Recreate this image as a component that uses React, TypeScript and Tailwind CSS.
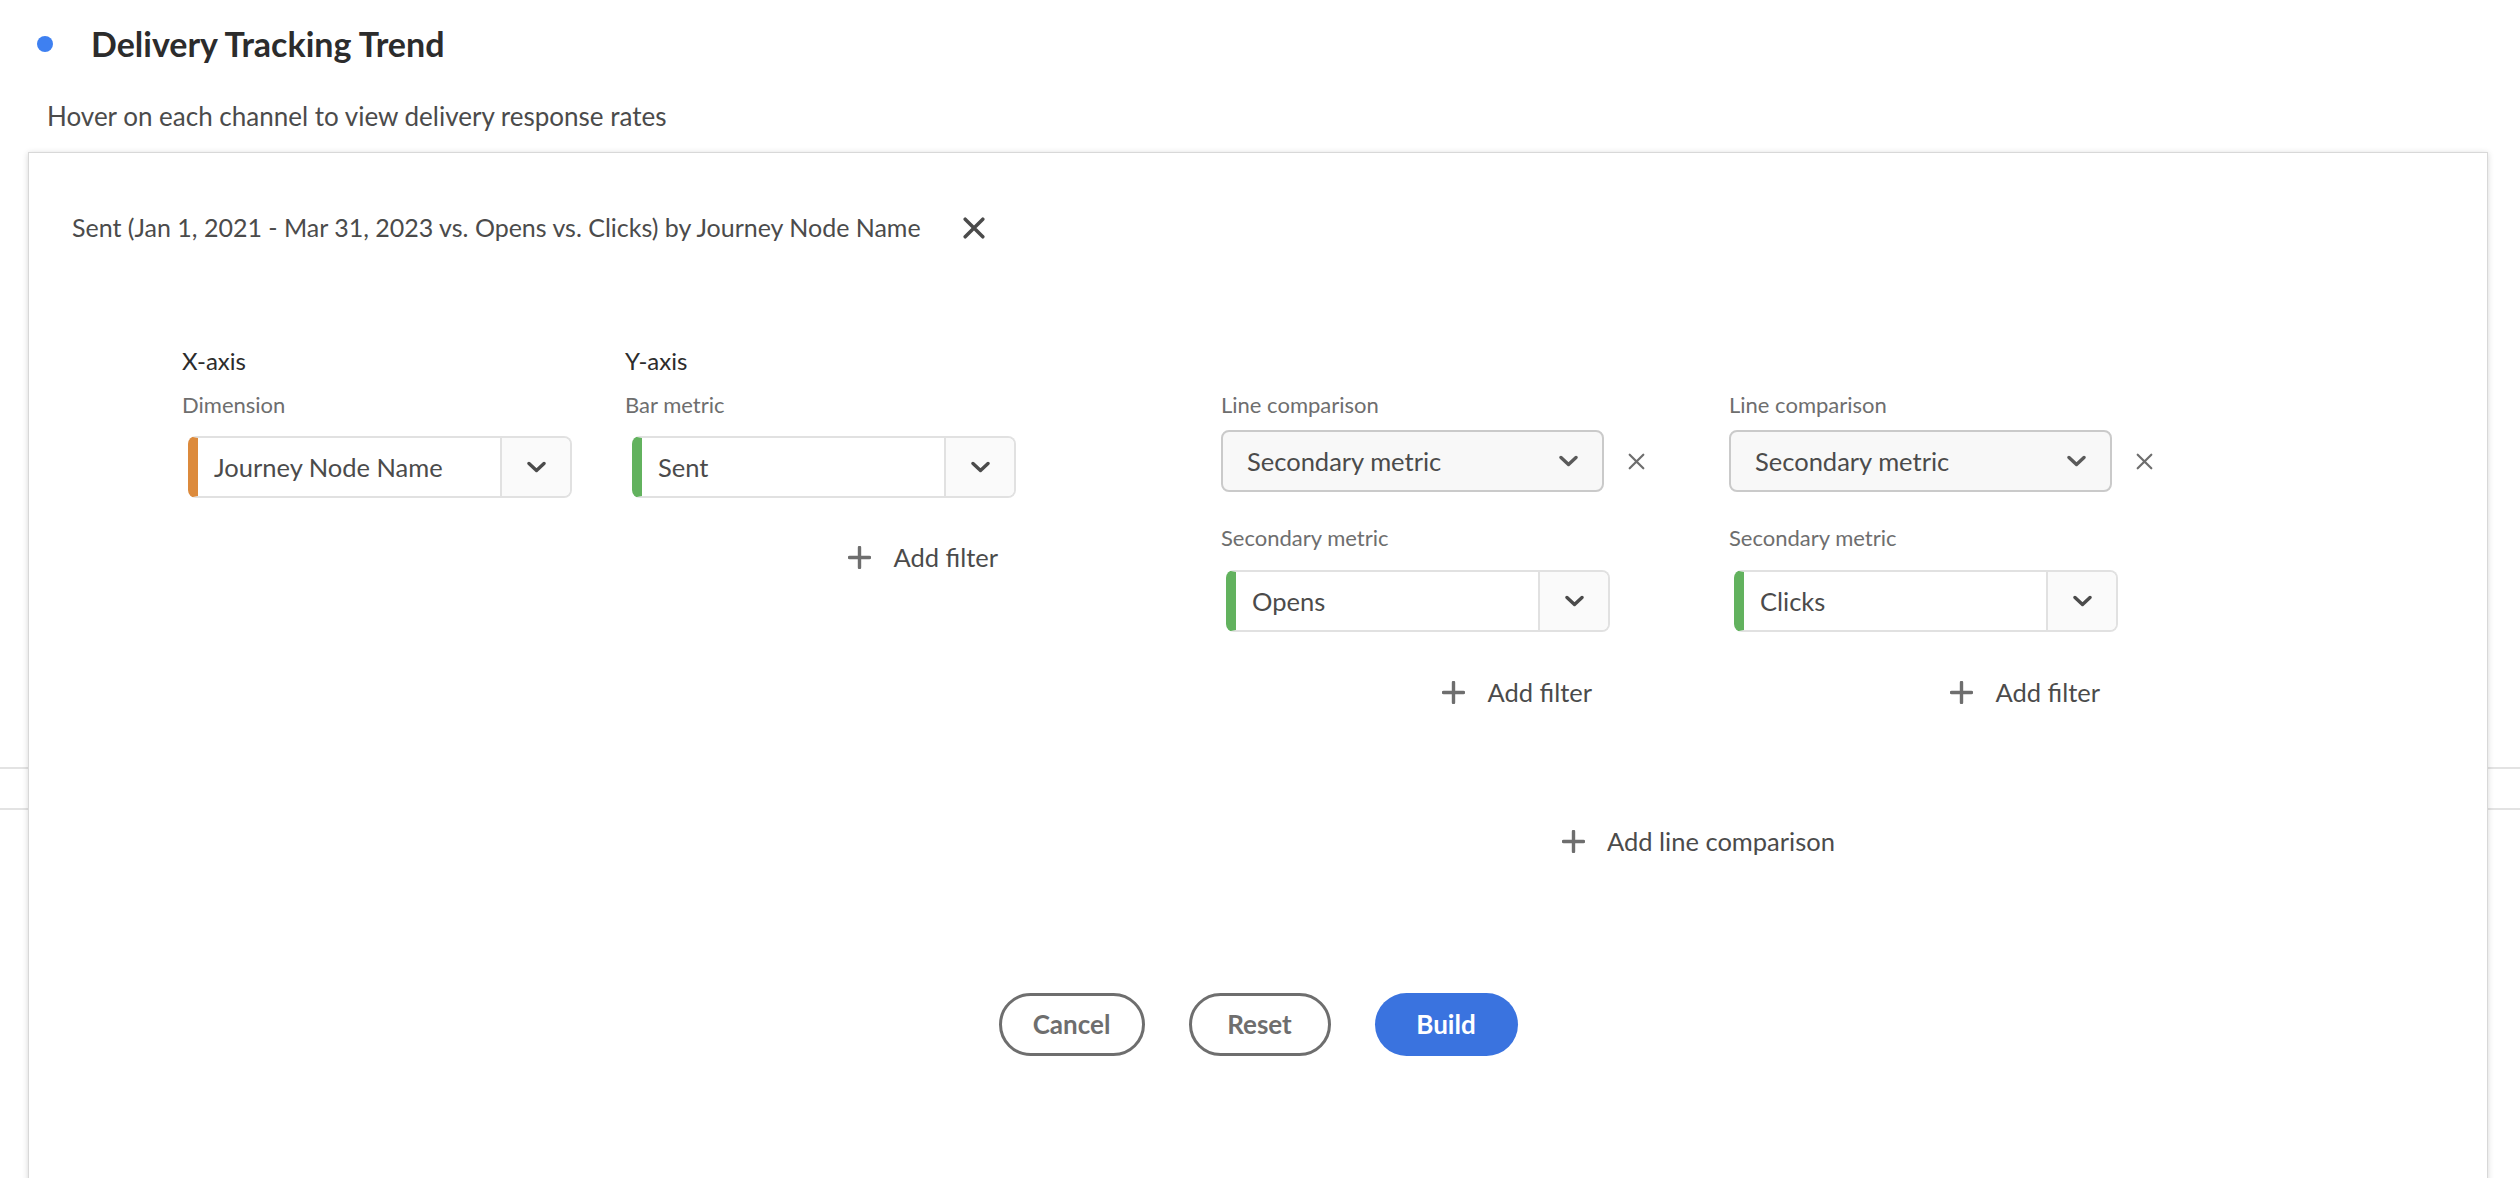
import React from "react";

const font = { fontFamily: "Lato, 'Noto Sans', sans-serif" };

function Chevron({ color = "#4b4b4b" }: { color?: string }) {
  return (
    <svg width="19" height="12" viewBox="0 0 19 12" fill="none">
      <path d="M2 2.5 L9.5 9.5 L17 2.5" stroke={color} strokeWidth="3.4" strokeLinecap="round" strokeLinejoin="round" />
    </svg>
  );
}

function Cross({ size, stroke, color }: { size: number; stroke: number; color: string }) {
  return (
    <svg width={size} height={size} viewBox="0 0 20 20" fill="none">
      <path d="M2 2 L18 18 M18 2 L2 18" stroke={color} strokeWidth={stroke} strokeLinecap="round" />
    </svg>
  );
}

function Plus() {
  return (
    <svg width="23" height="23" viewBox="0 0 23 23" fill="none">
      <path d="M11.5 1.5 V21.5 M1.5 11.5 H21.5" stroke="#6e6e6e" strokeWidth="3.4" strokeLinecap="round" />
    </svg>
  );
}

function MetricPicker({ label, accent }: { label: string; accent: "orange" | "green" }) {
  return (
    <div
      className={
        "flex h-[62px] w-[384px] overflow-hidden rounded-[8px] border-2 border-[#e1e1e1] border-l-[10px] " +
        (accent === "orange" ? "border-l-[#dc8a3c]" : "border-l-[#62b25e]")
      }
    >
      <div className="flex flex-1 items-center bg-white pl-[16px] text-[25.5px] text-[#4b4b4b]">{label}</div>
      <div className="flex w-[70px] items-center justify-center border-l-2 border-[#e1e1e1] bg-[#fafafa]">
        <Chevron />
      </div>
    </div>
  );
}

function LineSelect() {
  return (
    <div className="flex items-center">
      <div className="flex h-[62px] w-[383px] items-center justify-between rounded-[8px] border-2 border-[#cacaca] bg-[#f8f8f8] pl-[24px] pr-[24px] text-[25.5px] text-[#4b4b4b]">
        <span>Secondary metric</span>
        <Chevron color="#5a5a5a" />
      </div>
      <div className="ml-[24px]">
        <Cross size={17} stroke={2.6} color="#6e6e6e" />
      </div>
    </div>
  );
}

function AddAction({ text }: { text: string }) {
  return (
    <div className="flex h-[40px] items-center gap-[22px] text-[25.5px] text-[#4b4b4b]">
      <Plus />
      <span>{text}</span>
    </div>
  );
}

function LineColumn({ metric }: { metric: string }) {
  return (
    <div className="flex w-[508px] flex-col">
      <div className="h-[32px]" />
      <div className="mt-[12px] flex h-[30px] items-center text-[22px] text-[#6e6e6e]">Line comparison</div>
      <div className="mt-[11px]">
        <LineSelect />
      </div>
      <div className="mt-[30px] flex h-[30px] items-center text-[22px] text-[#6e6e6e]">Secondary metric</div>
      <div className="ml-[5px] mt-[18px]">
        <MetricPicker label={metric} accent="green" />
      </div>
      <div className="mt-[40px] flex w-[389px] justify-end pr-[18px]">
        <AddAction text="Add filter" />
      </div>
    </div>
  );
}

export default function App() {
  return (
    <div className="h-screen w-full overflow-hidden bg-white" style={font}>
      <div className="flex h-[88px] items-center pl-[37px]">
        <div className="h-[16px] w-[16px] rounded-full bg-[#3e80f1]" />
        <h2 className="ml-[38px] text-[34px] font-bold leading-none text-[#2c2c2c]">Delivery Tracking Trend</h2>
      </div>
      <p className="mt-[8px] pl-[47px] text-[26px] leading-[40px] text-[#4b4b4b]">
        Hover on each channel to view delivery response rates
      </p>

      <div className="relative mt-[16px] flex h-[1030px] flex-col">
        <div className="mt-[615px] h-[43px] border-y-2 border-[#e3e3e3]" />

        <div className="absolute left-[28px] top-0 h-[1100px] w-[2460px] border border-[#d8d8d8] bg-white shadow-[0_1px_6px_rgba(0,0,0,0.16)]">
          <div className="mt-[59px] flex h-[32px] items-center pl-[43px]">
            <span className="text-[25px] text-[#4b4b4b]">
              Sent (Jan 1, 2021 - Mar 31, 2023 vs. Opens vs. Clicks) by Journey Node Name
            </span>
            <button className="ml-[42px]">
              <Cross size={22} stroke={3.2} color="#4b4b4b" />
            </button>
          </div>

          <div className="mt-[101px] flex pl-[153px]">
            <div className="flex w-[443px] flex-col">
              <div className="flex h-[32px] items-center text-[24px] text-[#2c2c2c]">X-axis</div>
              <div className="mt-[12px] flex h-[30px] items-center text-[22px] text-[#6e6e6e]">Dimension</div>
              <div className="ml-[6px] mt-[17px]">
                <MetricPicker label="Journey Node Name" accent="orange" />
              </div>
            </div>

            <div className="flex w-[596px] flex-col">
              <div className="flex h-[32px] items-center text-[24px] text-[#2c2c2c]">Y-axis</div>
              <div className="mt-[12px] flex h-[30px] items-center text-[22px] text-[#6e6e6e]">Bar metric</div>
              <div className="ml-[7px] mt-[17px]">
                <MetricPicker label="Sent" accent="green" />
              </div>
              <div className="mt-[39px] flex w-[389px] justify-end pr-[16px]">
                <AddAction text="Add filter" />
              </div>
            </div>

            <LineColumn metric="Opens" />
            <LineColumn metric="Clicks" />
          </div>

          <div className="mt-[109px] flex pl-[1533px]">
            <AddAction text="Add line comparison" />
          </div>

          <div className="mt-[132px] flex justify-center gap-[44px]">
            <button className="h-[63px] w-[146px] rounded-full border-[3.5px] border-[#6e6e6e] text-[26px] font-bold text-[#6e6e6e]">
              Cancel
            </button>
            <button className="h-[63px] w-[142px] rounded-full border-[3.5px] border-[#6e6e6e] text-[26px] font-bold text-[#6e6e6e]">
              Reset
            </button>
            <button className="h-[63px] w-[143px] rounded-full bg-[#3a73df] text-[26px] font-bold text-white">
              Build
            </button>
          </div>
        </div>
      </div>
    </div>
  );
}
